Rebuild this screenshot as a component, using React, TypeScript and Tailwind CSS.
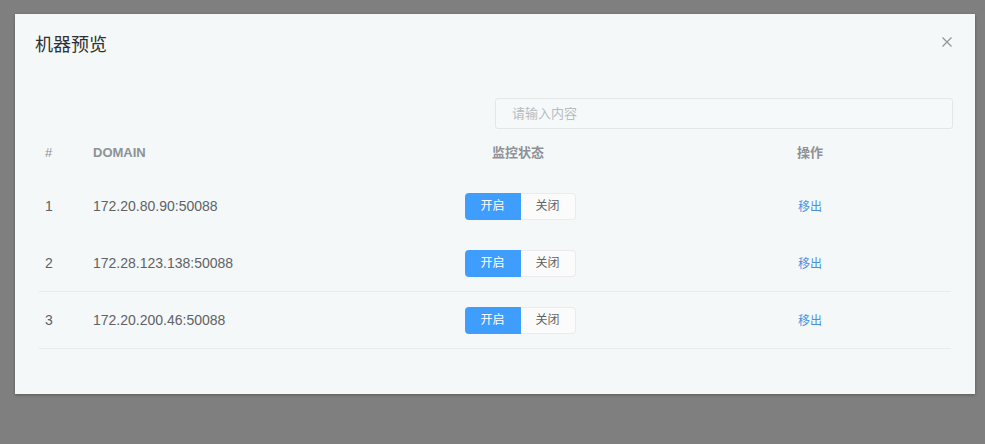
type Machine = { id: number; domain: string; on: boolean };

const machines: Machine[] = [
  { id: 1, domain: "172.20.80.90:50088", on: true },
  { id: 2, domain: "172.28.123.138:50088", on: true },
  { id: 3, domain: "172.20.200.46:50088", on: true },
];

const font = {
  fontFamily: '"Liberation Sans", "Noto Sans CJK SC", sans-serif',
};

function Toggle({ on }: { on: boolean }) {
  return (
    <div className="flex h-[27px] text-[12px]">
      <button
        className={`w-[56px] rounded-l-[4px] ${
          on ? "bg-[#3f9dfd] text-white" : "bg-[#fbfbfb] text-[#606266] border border-[#e9ebee]"
        }`}
      >
        开启
      </button>
      <button
        className={`w-[55px] rounded-r-[4px] ${
          on ? "bg-[#fbfbfb] text-[#606266] border border-l-0 border-[#e9ebee]" : "bg-[#3f9dfd] text-white"
        }`}
      >
        关闭
      </button>
    </div>
  );
}

export default function App() {
  return (
    <div className="h-[444px] w-full bg-[#7f7f7f] pt-[14px] pl-[15px]" style={font}>
      <div className="h-[380px] w-[960px] bg-[#f5f8f8] shadow-[0_1px_3px_rgba(0,0,0,0.3)]">
        {/* Header */}
        <div className="flex items-start justify-between pl-5 pr-[23px] pt-[19px]">
          <h2 className="text-[18px] leading-6 text-[#303133]">机器预览</h2>
          <button className="mt-[4px] text-[#909399]">
            <svg width="10" height="10" viewBox="0 0 10 10" stroke="currentColor" strokeWidth="1.2">
              <path d="M0.5 0.5 L9.5 9.5 M9.5 0.5 L0.5 9.5" />
            </svg>
          </button>
        </div>

        {/* Body */}
        <div className="px-6 pt-[41px]">
          <div className="flex justify-end">
            <input
              placeholder="请输入内容"
              className="h-[31px] w-[458px] -mr-[2px] rounded-[3px] border border-[#e3e7e8] bg-[#f6f9f9] px-[16px] text-[13px] text-[#606266] outline-none placeholder:text-[#b8bcc2]"
            />
          </div>

          <div className="grid h-[49px] grid-cols-[54px_278px_298px_1fr] items-center pb-[1px] text-[13px] font-bold text-[#8e9196]">
            <div className="pl-[6px] font-normal">#</div>
            <div>DOMAIN</div>
            <div className="pr-[4px] text-center">监控状态</div>
            <div className="text-center">操作</div>
          </div>

          {machines.map((m, i) => (
            <div
              key={m.id}
              className={`grid h-[57px] grid-cols-[54px_278px_298px_1fr] items-center text-[14px] text-[#606266] ${
                i > 0 ? "border-b border-[#e8ecee]" : "border-b border-transparent"
              }`}
            >
              <div className="pl-[6px]">{m.id}</div>
              <div>{m.domain}</div>
              <div className="flex justify-center">
                <Toggle on={m.on} />
              </div>
              <div className="text-center">
                <button className="text-[12px] text-[#4a90e2]">移出</button>
              </div>
            </div>
          ))}
        </div>
      </div>
    </div>
  );
}
